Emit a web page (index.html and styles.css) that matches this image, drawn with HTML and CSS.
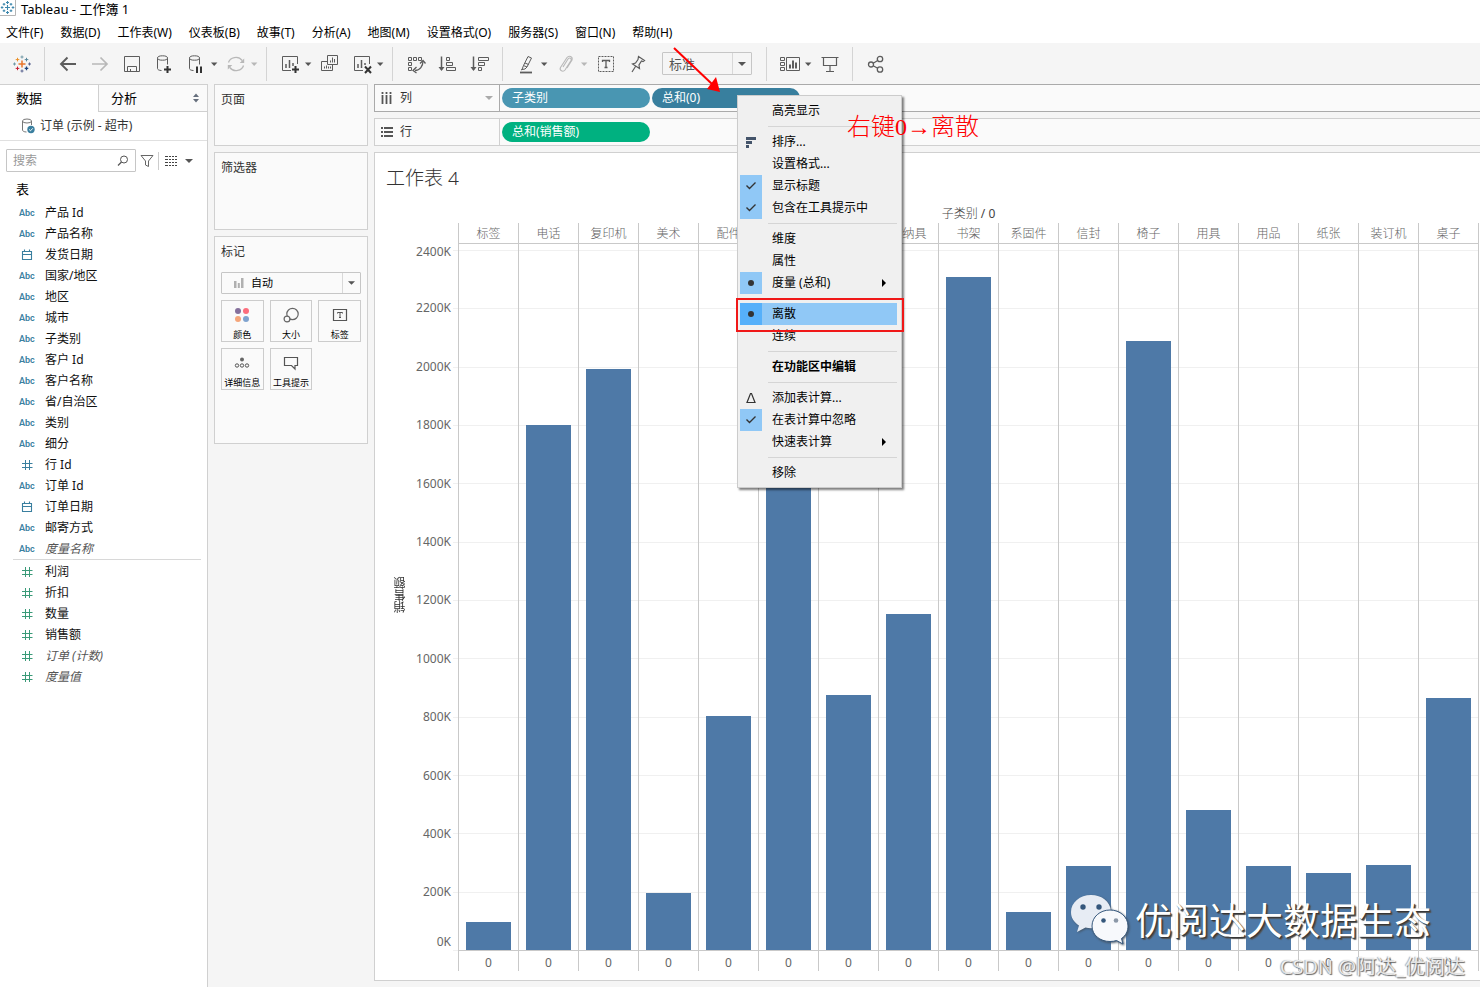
FILE: index.html
```html
<!DOCTYPE html>
<html lang="zh-CN">
<head>
<meta charset="utf-8">
<title>Tableau - 工作簿 1</title>
<link rel="stylesheet" href="styles.css">
</head>
<body>
<svg class="defs" aria-hidden="true">
  <symbol id="caret" viewBox="0 0 8 8"><path d="M1 2.5h6.4L4.2 6z" fill="currentColor"/></symbol>
  <symbol id="caret-lg" viewBox="0 0 8 8"><path d="M0 2h8L4 6z" fill="currentColor"/></symbol>
  <symbol id="hash" viewBox="0 0 12 12"><path d="M4.500 1v10M8.500 1v10M1 4.500h10.500M1 8.500h10.500" fill="none" stroke="currentColor"/></symbol>
  <symbol id="date" viewBox="0 0 12 12"><path d="M1.500 2.500h9v8h-9zM1.500 5.500h9M3.500 .5v2M8.500 .5v2" fill="none" stroke="currentColor" stroke-width="1.1"/></symbol>
  <symbol id="check" viewBox="0 0 12 12"><path d="M1.500 5.500l3 3 6-6" fill="none" stroke="#333" stroke-width="1.4"/></symbol>
</svg>

<header class="titlebar">
  <svg class="app-icon" viewBox="0 0 16 16"><path d="M15.500 0v15.500H0" fill="none" stroke="#b5b5b5"/><path d="M7.500 5v5M5 7.500h5M7.500 1v3M6 2.500h3M7.500 11v3M6 12.500h3M4 3v2.600M2.700 4.300h2.600M11 3v2.600M9.700 4.300h2.600M4 9.400V12M2.700 10.700h2.600M11 9.400V12M9.700 10.700h2.600M2 6.200v2.600M.8 7.500h2.600M13 6.200v2.600M11.700 7.500h2.600" fill="none" stroke="#3d87ac" stroke-width="1.100"/></svg>
  <span>Tableau - 工作簿 1</span>
</header>

<nav class="menubar">
  <button>文件(F)</button><button>数据(D)</button><button>工作表(W)</button><button>仪表板(B)</button><button>故事(T)</button><button>分析(A)</button><button>地图(M)</button><button>设置格式(O)</button><button>服务器(S)</button><button>窗口(N)</button><button>帮助(H)</button>
</nav>

<div class="toolbar">
  <div class="group">
    <button class="tool" aria-label="起始页"><svg viewBox="0 0 20 20" fill="none"><path d="M10 6.500v7M6.500 10h7" stroke="#e8762c" stroke-width="1.500"/><path d="M5.500 3.800v3.600M3.700 5.600h3.600" stroke="#eb9129"/><path d="M14.500 3.800v3.600M12.700 5.600h3.600" stroke="#59879b"/><path d="M5.500 12.600v3.600M3.700 14.400h3.600" stroke="#c72035"/><path d="M14.500 12.600v3.600M12.700 14.400h3.600" stroke="#1f457e" stroke-width="1.300"/><path d="M10 1.500v3M8.500 3h3M2.500 8.500v3M1 10h3" stroke="#7099a6"/><path d="M10 15.500v3M8.500 17h3M17.500 8.500v3M16 10h3" stroke="#5b6591"/></svg></button>
  </div>
  <i class="sep"></i>
  <div class="group">
    <button class="tool" aria-label="撤消"><svg viewBox="0 0 20 20"><path d="M18 10H3M9.500 3.500L3 10l6.500 6.500" stroke-width="1.900"/></svg></button>
    <button class="tool off" aria-label="重做"><svg viewBox="0 0 20 20"><path d="M2 10h15M10.500 3.500L17 10l-6.500 6.500" stroke-width="1.700"/></svg></button>
    <button class="tool" aria-label="保存"><svg viewBox="0 0 20 20"><path d="M2.500 2.500h15v15h-15zM5.500 17.500v-5h9v5M8.500 17v-2"/></svg></button>
    <button class="tool" aria-label="新建数据源"><svg viewBox="0 0 20 20"><path d="M3.500 4.500v10c0 1 1.500 2 4 2M13.500 4.500v6"/><ellipse cx="8.500" cy="4" rx="5" ry="2.200"/><path d="M13.500 12v7M10 15.500h7" stroke="#333" stroke-width="2"/></svg></button>
    <span class="pair"><button class="tool" aria-label="暂停更新"><svg viewBox="0 0 20 20"><path d="M3.500 4.500v10c0 1 1.500 2 4 2M13.500 4.500v6"/><ellipse cx="8.500" cy="4" rx="5" ry="2.200"/><path d="M11 12.500V19M15 12.500V19" stroke="#333" stroke-width="2"/></svg></button><svg class="caret"><use href="#caret"/></svg></span>
    <span class="pair off"><button class="tool off" aria-label="运行更新"><svg viewBox="0 0 20 20"><path d="M2.500 8.500C4 3.500 12 1 16.200 6.500M17.500 11.500C16 16.500 8 19 3.800 13.500" stroke-width="1.300"/><path d="M18.200 4.500v4.500h-4.500zM1.800 15.500V11h4.500z" fill="currentColor" stroke="none"/></svg></button><svg class="caret"><use href="#caret"/></svg></span>
  </div>
  <i class="sep"></i>
  <div class="group">
    <span class="pair"><button class="tool" aria-label="新建工作表"><svg viewBox="0 0 20 20"><path d="M17.500 10V2.500h-15v14H11"/><path d="M6 14v-4M9.500 14V6M13 12V9" stroke-width="1.500"/><path d="M15.500 12v7M12 15.500h7" stroke="#333" stroke-width="2"/></svg></button><svg class="caret"><use href="#caret"/></svg></span>
    <button class="tool" aria-label="复制"><svg viewBox="0 0 20 20"><path d="M7.500 1.500h10v9h-10zM7 7.500H1.500v9h11V11M10.500 8.500v-2M12.500 8.500v-5M14.500 8.500V5M4.500 14.500v-2M6.500 14.500v-3M8.500 14.500v-2M10.500 14.500v-2"/></svg></button>
    <span class="pair"><button class="tool" aria-label="清除工作表"><svg viewBox="0 0 20 20"><path d="M17.500 10V2.500h-15v14H11"/><path d="M6 14v-4M9.500 14V6M13 11V9" stroke-width="1.500"/><path d="M13 12.500l6 6.500M19 12.500L13 19" stroke="#333" stroke-width="2"/></svg></button><svg class="caret"><use href="#caret"/></svg></span>
  </div>
  <i class="sep"></i>
  <div class="group">
    <button class="tool" aria-label="交换行和列"><svg viewBox="0 0 20 20"><path d="M2.500 3.500h3v3h-3zM7.500 3.500h3v3h-3zM12.500 3.500h3v3h-3zM2.500 8.500h3v3h-3zM2.500 13.500h3v3h-3z"/><path d="M17 7c0 5-3 9.500-8 9.500" stroke-width="1.300"/><path d="M14 9.500L17 6.500l2.500 3M10.500 13L7 16.500l3.500 2.500" stroke-width="1.300"/></svg></button>
    <button class="tool" aria-label="升序排序"><svg viewBox="0 0 20 20"><path d="M3.500 2.500v13" stroke-width="1.500"/><path d="M.5 13h6l-3 4z" fill="currentColor" stroke="none"/><path d="M8.500 3.500h3v3h-3zM8.500 8.500h6v3h-6zM8.500 13.500h9v3h-9z"/></svg></button>
    <button class="tool" aria-label="降序排序"><svg viewBox="0 0 20 20"><path d="M3.500 2.500v13" stroke-width="1.500"/><path d="M.5 13h6l-3 4z" fill="currentColor" stroke="none"/><path d="M8.500 3.500h10v3h-10zM8.500 8.500h6v3h-6zM8.500 13.500h3v3h-3z"/></svg></button>
  </div>
  <i class="sep"></i>
  <div class="group">
    <span class="pair"><button class="tool" aria-label="突出显示"><svg viewBox="0 0 20 20"><path d="M12 2.500l3.500 1.500-4.500 9-3.500-1.500zM7.500 11.500L6 15.500l3-.5 2-2M9 9l3.500 1.500M6 15.500L5 16"/><path d="M4 18.500h12" stroke-width="1.800"/></svg></button><svg class="caret"><use href="#caret"/></svg></span>
    <span class="pair off"><button class="tool off" aria-label="对成员分组"><svg viewBox="0 0 20 20"><path d="M7 13l5-8c1.500-2 4-.5 3 1.500l-6 9.500c-2 2.500-6 .5-4.500-2.500l6.500-10c2-2.500 6-1 5 2.500L11 14" stroke-width="1.100"/></svg></button><svg class="caret"><use href="#caret"/></svg></span>
    <button class="tool" aria-label="显示标记标签"><svg viewBox="0 0 20 20"><path d="M2.500 2.500h15v15h-15z" stroke-dasharray="2 1"/><path d="M6.500 8V6.500h7V8M10 6.500v7M8.500 13.500h3" stroke-width="1.300"/></svg></button>
    <button class="tool" aria-label="固定轴"><svg viewBox="0 0 20 20"><path d="M10.500 2.500l6 4-1.500 1-1.500-.5-2.500 4 .5 3.500-7-4.500 3-1L10 5.500zM7.500 12.500L4 18" stroke-width="1.200"/></svg></button>
  </div>
  <label class="fit"><select aria-label="适合"><option>标准</option></select><svg class="caret"><use href="#caret-lg"/></svg></label>
  <i class="sep"></i>
  <div class="group">
    <span class="pair"><button class="tool" aria-label="显示/隐藏卡"><svg class="wide" viewBox="0 0 22 20"><path d="M1.500 3.500h4v3h-4zM1.500 8.500h4v3h-4zM1.500 13.500h4v3h-4zM7.500 3.500h13v13h-13z"/><path d="M11 14.500v-4M14 14.500v-8M17 14.500v-6" stroke-width="2"/></svg></button><svg class="caret"><use href="#caret"/></svg></span>
    <button class="tool" aria-label="演示模式"><svg viewBox="0 0 20 20"><path d="M1.500 3.500h17M3.500 3.500v8h13v-8M10 11.500v6M6 17.500h8" stroke-width="1.200"/></svg></button>
  </div>
  <i class="sep"></i>
  <div class="group">
    <button class="tool" aria-label="共享"><svg viewBox="0 0 20 20"><circle cx="5" cy="10.500" r="2.500" stroke-width="1.300"/><circle cx="14" cy="5" r="2.700" stroke-width="1.300"/><circle cx="14" cy="15.500" r="2.700" stroke-width="1.300"/><path d="M7.200 9.200l4.500-2.700M7.200 11.700l4.500 2.600" stroke-width="1.300"/></svg></button>
  </div>
</div>

<main class="workspace">
  <aside class="data-pane">
    <div class="tabs">
      <button class="tab active">数据</button>
      <button class="tab">分析 <svg viewBox="0 0 8 10"><path d="M1 4h6L4 .5zM1 6h6L4 9.500z" fill="#666f7d"/></svg></button>
    </div>
    <div class="source">
      <svg viewBox="0 0 14 16" fill="none"><path d="M1.500 3v9c0 1 1.500 2 4 2M10.500 3v4" stroke="#777"/><ellipse cx="6" cy="3" rx="4.500" ry="2" stroke="#777"/><circle cx="10" cy="11.500" r="3.700" fill="#3a7f9f"/><path d="M8.200 11.500l1.300 1.300 2.300-2.500" stroke="#fff"/></svg>
      <span>订单 (示例 - 超市)</span>
    </div>
    <div class="search-row">
      <label class="search"><input type="text" placeholder="搜索" aria-label="搜索"><svg viewBox="0 0 12 12"><circle cx="7" cy="4.500" r="3.500" fill="none" stroke="#555"/><path d="M4.500 7L1 10.500" stroke="#555" stroke-width="1.300"/></svg></label>
      <button class="plain" aria-label="筛选"><svg class="funnel" viewBox="0 0 14 14"><path d="M1 1.500h12L8.500 7v5.500L5.500 11V7z" fill="none" stroke="#666"/></svg></button>
      <i class="bar-sep"></i>
      <button class="plain view" aria-label="视图"><svg class="lines" viewBox="0 0 12 10"><path d="M0 .5h12M0 3.500h12M0 6.500h12M0 9.500h12" stroke="#444" stroke-dasharray="3 1 2 1 2 1 2 9"/></svg><svg class="caret"><use href="#caret-lg"/></svg></button>
    </div>
    <h2 class="tables">表</h2>
    <ul class="fields dims">
      <li><b>Abc</b>产品 Id</li>
      <li><b>Abc</b>产品名称</li>
      <li><svg><use href="#date"/></svg>发货日期</li>
      <li><b>Abc</b>国家/地区</li>
      <li><b>Abc</b>地区</li>
      <li><b>Abc</b>城市</li>
      <li><b>Abc</b>子类别</li>
      <li><b>Abc</b>客户 Id</li>
      <li><b>Abc</b>客户名称</li>
      <li><b>Abc</b>省/自治区</li>
      <li><b>Abc</b>类别</li>
      <li><b>Abc</b>细分</li>
      <li><svg><use href="#hash"/></svg>行 Id</li>
      <li><b>Abc</b>订单 Id</li>
      <li><svg><use href="#date"/></svg>订单日期</li>
      <li><b>Abc</b>邮寄方式</li>
      <li><b>Abc</b><em>度量名称</em></li>
    </ul>
    <ul class="fields measures">
      <li><svg><use href="#hash"/></svg>利润</li>
      <li><svg><use href="#hash"/></svg>折扣</li>
      <li><svg><use href="#hash"/></svg>数量</li>
      <li><svg><use href="#hash"/></svg>销售额</li>
      <li><svg><use href="#hash"/></svg><em>订单 (计数)</em></li>
      <li><svg><use href="#hash"/></svg><em>度量值</em></li>
    </ul>
  </aside>

  <div class="cards">
    <section class="card pages"><h3>页面</h3></section>
    <section class="card filters"><h3>筛选器</h3></section>
    <section class="card marks">
      <h3>标记</h3>
      <label class="mark-type">
        <svg viewBox="0 0 10 10"><path d="M0 3h2.500v7H0zM3.800 5h2v5h-2zM7 0h2.500v10H7z" fill="#b0b0b0"/></svg>
        <select aria-label="标记类型"><option>自动</option></select>
        <svg class="caret"><use href="#caret-lg"/></svg>
      </label>
      <div class="mark-grid">
        <button><svg viewBox="0 0 16 16"><circle cx="4" cy="4" r="3" fill="#85709c"/><circle cx="12" cy="4" r="3" fill="#fc6d7c"/><circle cx="4" cy="12" r="3" fill="#f5a57a"/><circle cx="12" cy="12" r="3" fill="#7fa3cf"/></svg>颜色</button>
        <button><svg viewBox="0 0 16 16" fill="#fafafa" stroke="#666" stroke-width="1.200"><circle cx="9.500" cy="7" r="5.700"/><circle cx="4" cy="12" r="2.900"/></svg>大小</button>
        <button><svg viewBox="0 0 16 16" fill="none" stroke="#555"><path d="M1.500 2.500h13v11h-13z" stroke-width="1.200"/><path d="M5.500 6.500v-1h5v1M8 5.500v5M7 10.500h2"/></svg>标签</button>
        <button><svg viewBox="0 0 16 16" fill="none" stroke="#555"><circle cx="8" cy="4.500" r="2" fill="#666" stroke="none"/><circle cx="3" cy="10.500" r="1.700"/><circle cx="8" cy="10.500" r="1.700"/><circle cx="13" cy="10.500" r="1.700"/></svg>详细信息</button>
        <button><svg viewBox="0 0 16 16" fill="none" stroke="#555" stroke-width="1.200"><path d="M1.500 2.500h13v8h-2.500V14l-3.500-3.500h-7z"/></svg>工具提示</button>
      </div>
    </section>
  </div>

  <div class="view-area">
    <div class="shelf selected">
      <div class="shelf-name"><svg viewBox="0 0 12 12"><path d="M1.500 0v2M5.500 0v2M9.500 0v2M1.500 3v9M5.500 3v9M9.500 3v9" stroke="#555" stroke-width="1.800"/></svg>列<svg class="caret"><use href="#caret-lg"/></svg></div>
      <div class="pills"><button class="pill dim">子类别</button><button class="pill dim open">总和(0)</button></div>
    </div>
    <div class="shelf">
      <div class="shelf-name"><svg viewBox="0 0 12 12"><path d="M0 2h2M0 6h2M0 10h2M3 2h9M3 6h9M3 10h9" stroke="#555" stroke-width="1.800"/></svg>行</div>
      <div class="pills"><button class="pill measure">总和(销售额)</button></div>
    </div>

    <section class="sheet">
      <h1>工作表 4</h1>
      <div class="chart">
        <div class="col-title">子类别 <span>/ 0</span></div>
        <div class="axis-title"><span>销售额</span></div>
        <div class="axis"><span>2400K</span><span>2200K</span><span>2000K</span><span>1800K</span><span>1600K</span><span>1400K</span><span>1200K</span><span>1000K</span><span>800K</span><span>600K</span><span>400K</span><span>200K</span><span>0K</span></div>
        <div class="plot">
          <div class="gridlines"><i></i><i></i><i></i><i></i><i></i><i></i><i></i><i></i><i></i><i></i><i></i><i></i><i></i></div>
          <div class="col"><span class="head">标签</span><div class="track"><div class="bar" style="height:4%"></div></div><span class="foot">0</span></div>
          <div class="col"><span class="head">电话</span><div class="track"><div class="bar" style="height:75%"></div></div><span class="foot">0</span></div>
          <div class="col"><span class="head">复印机</span><div class="track"><div class="bar" style="height:83%"></div></div><span class="foot">0</span></div>
          <div class="col"><span class="head">美术</span><div class="track"><div class="bar" style="height:8.2%"></div></div><span class="foot">0</span></div>
          <div class="col"><span class="head">配件</span><div class="track"><div class="bar" style="height:33.4%"></div></div><span class="foot">0</span></div>
          <div class="col"><span class="head">器具</span><div class="track"><div class="bar" style="height:90%"></div></div><span class="foot">0</span></div>
          <div class="col"><span class="head">设备</span><div class="track"><div class="bar" style="height:36.4%"></div></div><span class="foot">0</span></div>
          <div class="col"><span class="head">收纳具</span><div class="track"><div class="bar" style="height:48%"></div></div><span class="foot">0</span></div>
          <div class="col"><span class="head">书架</span><div class="track"><div class="bar" style="height:96.1%"></div></div><span class="foot">0</span></div>
          <div class="col"><span class="head">系固件</span><div class="track"><div class="bar" style="height:5.4%"></div></div><span class="foot">0</span></div>
          <div class="col"><span class="head">信封</span><div class="track"><div class="bar" style="height:12%"></div></div><span class="foot">0</span></div>
          <div class="col"><span class="head">椅子</span><div class="track"><div class="bar" style="height:87%"></div></div><span class="foot">0</span></div>
          <div class="col"><span class="head">用具</span><div class="track"><div class="bar" style="height:20%"></div></div><span class="foot">0</span></div>
          <div class="col"><span class="head">用品</span><div class="track"><div class="bar" style="height:12%"></div></div><span class="foot">0</span></div>
          <div class="col"><span class="head">纸张</span><div class="track"><div class="bar" style="height:11%"></div></div><span class="foot">0</span></div>
          <div class="col"><span class="head">装订机</span><div class="track"><div class="bar" style="height:12.1%"></div></div><span class="foot">0</span></div>
          <div class="col"><span class="head">桌子</span><div class="track"><div class="bar" style="height:36%"></div></div><span class="foot">0</span></div>
        </div>
      </div>
    </section>
  </div>
</main>

<div class="context-menu" role="menu">
  <button role="menuitem"><i></i>高亮显示</button>
  <hr>
  <button role="menuitem"><i><svg viewBox="0 0 12 12"><path d="M1 1h10v3H1zM1 5h6v3H1zM1 9h3v3H1z" fill="#44546a"/></svg></i>排序...</button>
  <button role="menuitem"><i></i>设置格式...</button>
  <button role="menuitem"><i class="on"><svg><use href="#check"/></svg></i>显示标题</button>
  <button role="menuitem"><i class="on"><svg><use href="#check"/></svg></i>包含在工具提示中</button>
  <hr>
  <button role="menuitem"><i></i>维度</button>
  <button role="menuitem"><i></i>属性</button>
  <button role="menuitem"><i class="on dot"></i>度量 (总和)<svg class="sub" viewBox="0 0 6 8"><path d="M1 0l4 4-4 4z"/></svg></button>
  <hr>
  <button role="menuitem" class="hover"><i class="on dot"></i>离散</button>
  <button role="menuitem"><i></i>连续</button>
  <hr>
  <button role="menuitem" class="strong"><i></i>在功能区中编辑</button>
  <hr>
  <button role="menuitem"><i><svg viewBox="0 0 12 12"><path d="M5.500 1.500h1L10 10.500H2z" fill="none" stroke="#333" stroke-width="1.200"/></svg></i>添加表计算...</button>
  <button role="menuitem"><i class="on"><svg><use href="#check"/></svg></i>在表计算中忽略</button>
  <button role="menuitem"><i></i>快速表计算<svg class="sub" viewBox="0 0 6 8"><path d="M1 0l4 4-4 4z"/></svg></button>
  <hr>
  <button role="menuitem"><i></i>移除</button>
</div>

<div class="callout-box"></div>
<svg class="callout-arrow" viewBox="0 0 50 50"><path d="M2 2l38 36" stroke="#f00" stroke-width="2"/><path d="M48 46L35 43l9-12z" fill="#f00"/></svg>
<p class="callout-text">右键0→离散</p>

<div class="brand">
  <svg viewBox="0 0 58 52"><g fill="#e7ecf4"><path d="M20 2C9 2 0 9.500 0 19c0 6 3 10 8 13.500L6 39l8.500-4.500c2 .5 4 .8 6.500.7C40 35 41 24 40 18 39 8.500 31 2 20 2z"/></g><circle cx="12" cy="14" r="2.700" fill="#35577c"/><circle cx="28" cy="14" r="2.700" fill="#35577c"/><path d="M39 17c-10 0-18 7-18 16s8 15.500 18 15.500c2.500 0 4.500-.3 6.500-1L52 51l-1.500-5.500C55 42.500 57 38 57 33c0-9-8-16-18-16z" fill="#f7f9fc" stroke="#35577c"/><circle cx="32.500" cy="27.500" r="2.300" fill="#35577c"/><circle cx="45" cy="27.500" r="2.300" fill="#8b98a8"/></svg>
  <span>优阅达大数据生态</span>
</div>
<div class="credit">CSDN @阿达_优阅达</div>
</body>
</html>
```

FILE: styles.css
```css
* { box-sizing: border-box; }

body {
  position: relative;
  display: flex;
  flex-direction: column;
  height: 100vh;
  margin: 0;
  overflow: hidden;
  background: #f5f5f5;
  color: #000;
  font: 12px/18px "Noto Sans", "Noto Sans CJK SC", sans-serif;
}

button, select, input { font: inherit; color: inherit; }
button { padding: 0; border: 0; background: none; }
h1, h2, h3, ul, p { margin: 0; padding: 0; font-weight: 400; }
svg { flex: none; }
.defs { position: absolute; width: 0; height: 0; }
.caret { width: 8px; height: 8px; color: #555; }

/* Window chrome */
.titlebar {
  display: flex;
  gap: 5px;
  height: 19px;
  background: #fff;
  font-size: 13px;
  line-height: 19px;
}
.app-icon { width: 16px; height: 16px; }

.menubar {
  display: flex;
  gap: 17px;
  height: 24px;
  padding: 5px 6px 1px;
  background: #fff;
}

.toolbar {
  display: flex;
  align-items: center;
  height: 41px;
  padding-left: 8px;
}
.group { display: flex; gap: 4px; }
.pair { display: flex; align-items: center; }
.tool { display: grid; place-items: center; width: 28px; height: 28px; color: #5c5c5c; }
.tool svg { width: 20px; height: 20px; fill: none; stroke: currentColor; }
.tool .wide { width: 22px; }
.tool.off, .off .caret { color: #b8b8b8; }
.sep { width: 1px; height: 34px; margin: 0 9px 0 8px; background: #d4d4d4; }

.fit {
  position: relative;
  width: 90px;
  height: 23px;
  margin: 0 6px 0 10px;
  border: 1px solid #c6c6c6;
  border-radius: 1px;
}
.fit select {
  width: 100%;
  height: 100%;
  padding: 0 6px;
  border: 0;
  background: linear-gradient(#d8d8d8, #d8d8d8) 69px 0 / 1px 100% no-repeat;
  appearance: none;
  color: #555;
  font-size: 13px;
}
.fit .caret { position: absolute; top: 7px; right: 5px; }

/* Workspace */
.workspace {
  display: grid;
  flex: 1;
  grid-template-columns: 208px 154px 1fr;
  min-height: 0;
}

.data-pane {
  border-top: 1px solid #d0d0d0;
  border-right: 1px solid #d0d0d0;
  background: #fff;
}
.tabs { display: grid; grid-template-columns: 98px 1fr; height: 27px; }
.tab {
  display: flex;
  align-items: center;
  justify-content: space-between;
  padding: 0 7px 0 12px;
  border-bottom: 1px solid #d0d0d0;
  border-left: 1px solid #d0d0d0;
  background: #fafafa;
  font-size: 13px;
}
.tab.active { padding: 0 16px 1px; border: 0; background: #fff; }
.tab svg { width: 8px; height: 10px; }
.source {
  display: flex;
  align-items: center;
  gap: 5px;
  height: 29px;
  padding-left: 21px;
  border-bottom: 1px solid #e0e0e0;
  color: #333;
}
.source svg { width: 14px; height: 16px; }
.search-row { display: flex; align-items: center; gap: 4px; padding: 8px 6px; }
.search {
  display: flex;
  align-items: center;
  width: 130px;
  height: 23px;
  padding: 0 6px;
  border: 1px solid #c6c6c6;
  border-radius: 1px;
}
.search input { flex: 1; min-width: 0; padding: 0; border: 0; outline: 0; background: none; }
.search input::placeholder { color: #999; opacity: 1; }
.search svg { width: 12px; height: 12px; }
.plain { display: flex; align-items: center; }
.funnel { width: 14px; height: 14px; }
.bar-sep { width: 1px; height: 18px; background: #ccc; }
.view { gap: 8px; margin-left: 2px; }
.lines { width: 12px; height: 10px; }
.tables { padding: 0 16px 4px; font-size: 13px; line-height: 18px; }

.fields { margin: 0 6px 0 13px; list-style: none; }
.fields li { display: flex; align-items: center; height: 21px; padding-left: 6px; color: #111; }
.fields b, .fields svg { width: 16px; margin-right: 10px; font: 600 9px/20px Roboto, sans-serif; }
.fields svg { height: 12px; }
.fields em { color: #555; }
.dims b, .dims svg { color: #3a7f9f; }
.measures { padding-top: 1px; border-top: 1px solid #d8d8d8; }
.measures svg { color: #3a9a78; }

/* Cards */
.cards {
  display: flex;
  flex-direction: column;
  gap: 6px;
  margin-left: 6px;
  margin-right: -6px;
}
.card { padding: 6px; border: 1px solid #d0d0d0; background: #fafafa; }
.card h3 { color: #333; font-size: 12px; line-height: 18px; }
.pages { height: 62px; }
.filters { height: 78px; }
.marks { height: 208px; }
.mark-type {
  position: relative;
  display: flex;
  align-items: center;
  height: 22px;
  margin: 11px 0 6px;
  padding-left: 12px;
  border: 1px solid #c6c6c6;
  border-radius: 1px;
}
.mark-type > svg:first-child { width: 10px; height: 10px; }
.mark-type select {
  flex: 1;
  height: 100%;
  padding: 0 0 0 7px;
  border: 0;
  background: none;
  appearance: none;
  font-size: 11px;
}
.mark-type .caret { width: 18px; height: 20px; padding: 6px 5px; border-left: 1px solid #d8d8d8; }
.mark-grid { display: grid; grid-template-columns: repeat(3, 1fr); gap: 6px; }
.mark-grid button {
  display: flex;
  flex-direction: column;
  align-items: center;
  gap: 6px;
  height: 42px;
  padding-top: 6px;
  border: 1px solid #ccc;
  font-size: 9px;
  line-height: 12px;
  white-space: nowrap;
}
.mark-grid svg { width: 16px; height: 16px; }

/* Shelves */
.view-area {
  display: flex;
  flex-direction: column;
  gap: 6px;
  min-width: 0;
  min-height: 0;
  padding: 0 0 6px 12px;
}
.shelf { display: flex; height: 28px; border: 1px solid #d0d0d0; border-right: 0; background: #fafafa; }
.shelf.selected { border-color: #aaa; }
.shelf-name {
  display: flex;
  align-items: center;
  gap: 7px;
  width: 125px;
  padding: 0 6px;
  border-right: 1px solid #d0d0d0;
  color: #333;
}
.shelf.selected .shelf-name { border-color: #aaa; }
.shelf-name > svg:first-child { width: 12px; height: 12px; }
.shelf-name .caret { margin-left: auto; color: #aaa; }
.pills { display: flex; align-items: center; gap: 2px; padding-left: 2px; }
.pill { width: 148px; height: 20px; padding: 0 10px; border-radius: 10px; color: #fff; text-align: left; }
.dim { background: #4996b2; }
.dim.open { background: #387f9e; }
.measure { background: #00b180; }

/* Sheet */
.sheet {
  display: flex;
  flex: 1;
  flex-direction: column;
  min-height: 0;
  padding: 12px 1px 9px 11px;
  border: 1px solid #d0d0d0;
  border-right: 0;
  background: #fff;
}
.sheet h1 { color: #333; font-size: 19px; font-weight: 300; line-height: 26px; }
.chart {
  display: grid;
  flex: 1;
  grid-template: 17px 1fr / 28px 44px 1fr;
  min-height: 0;
  padding-top: 15px;
}
.col-title { grid-column: 3; color: #444; font-weight: 300; line-height: 16px; text-align: center; }
.col-title span { font-weight: 400; }
.axis-title { grid-column: 1; display: grid; place-items: center; padding: 0 0 4px 2px; color: #333; font-weight: 400; }
.axis-title span { writing-mode: vertical-rl; transform: rotate(180deg); }
.axis {
  display: flex;
  flex-direction: column;
  justify-content: space-between;
  padding: 27px 7px 20px 0;
  color: #666;
  text-align: right;
}
.axis span { height: 0; line-height: 0; }
.axis span:first-child { line-height: 4px; }
.axis span:last-child { height: 18px; margin-top: -18px; line-height: 18px; }

.plot { position: relative; display: grid; grid-template-columns: repeat(17, 1fr); min-height: 0; border-right: 1px solid #c9c9c9; }
.gridlines {
  position: absolute;
  inset: 27px 0 20px -5px;
  display: flex;
  flex-direction: column;
  justify-content: space-between;
}
.gridlines i { height: 1px; background: #f0f0f0; }
.col { position: relative; display: flex; flex-direction: column; min-height: 0; border-left: 1px solid #c9c9c9; text-align: center; }
.head { height: 21px; border-bottom: 1px solid #c9c9c9; color: #666; font-weight: 300; line-height: 21px; }
.track { display: flex; flex: 1; align-items: flex-end; justify-content: center; min-height: 0; margin-top: 6px; border-bottom: 1px solid #c9c9c9; }
.bar { width: 75%; background: #4e79a7; }
.foot { height: 20px; color: #666; line-height: 23px; }

/* Context menu */
.context-menu {
  position: absolute;
  top: 95px;
  left: 737px;
  width: 165px;
  padding: 4px 4px 3px 2px;
  border: 1px solid #ccc;
  background: #f0f0f0;
  box-shadow: 2px 2px 2px rgba(0, 0, 0, 0.5);
}
.context-menu button { display: flex; align-items: center; width: 100%; height: 22px; text-align: left; }
.context-menu i { display: grid; place-items: center; width: 22px; height: 22px; margin-right: 10px; }
.context-menu i svg { width: 12px; height: 12px; }
.context-menu .on { background: #90c8f6; }
.context-menu .dot::before { content: ""; width: 6px; height: 6px; border-radius: 50%; background: #333; }
.context-menu .hover { background: #90c8f6; }
.context-menu .hover .on { background: #56b0fa; }
.context-menu .strong { font-weight: 700; }
.context-menu .sub { width: 6px; height: 8px; margin: 0 10px 0 auto; }
.context-menu hr { height: 1px; margin: 4px 0 4px 28px; border: 0; background: #d5d5d5; }

/* Callouts */
.callout-box { position: absolute; top: 298px; left: 736px; width: 168px; height: 34px; border: 2px solid #f01818; }
.callout-arrow { position: absolute; top: 46px; left: 672px; width: 50px; height: 50px; }
.callout-text {
  position: absolute;
  top: 112px;
  left: 847px;
  color: #f00;
  font: 300 24px/30px "Liberation Serif", "Noto Sans CJK SC", serif;
}

/* Watermarks */
.brand {
  position: absolute;
  right: 49px;
  bottom: 42px;
  display: flex;
  align-items: center;
  gap: 6px;
  color: #fff;
  font: 37px/52px "Noto Sans CJK SC", sans-serif;
  text-shadow: 1px 1px 1px #333, 2px 2px 1px #555;
}
.brand svg { width: 58px; height: 52px; filter: drop-shadow(1px 1px 1px #456); }
.credit {
  position: absolute;
  right: 15px;
  bottom: 7px;
  color: rgba(255, 255, 255, 0.8);
  font: 20px/26px "Open Sans", "Noto Sans CJK SC", sans-serif;
  text-shadow: 1px 1px 1px #666, -1px 0 1px #aaa;
}
```
